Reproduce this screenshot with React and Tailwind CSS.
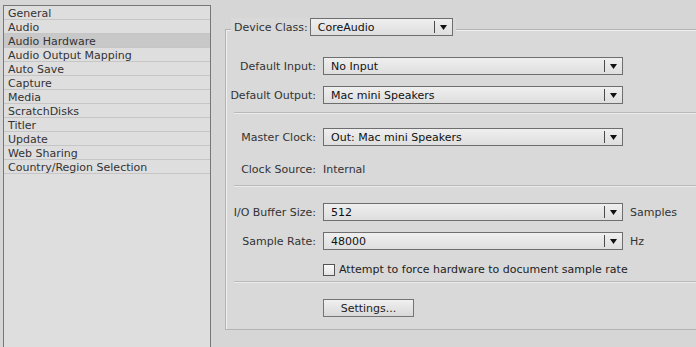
import React from "react";

const sections = [
  "General",
  "Audio",
  "Audio Hardware",
  "Audio Output Mapping",
  "Auto Save",
  "Capture",
  "Media",
  "ScratchDisks",
  "Titler",
  "Update",
  "Web Sharing",
  "Country/Region Selection",
];

const Arrow = () => (
  <svg width="7" height="5" viewBox="0 0 7 5" className="shrink-0">
    <path d="M0 0h7L3.5 5z" fill="#111" />
  </svg>
);

const Dropdown = ({ value, width }) => (
  <div
    className={`flex h-[18px] items-center border border-[#6e6e6e] bg-gradient-to-b from-[#efefef] to-[#dedede] ${width}`}
  >
    <span className="flex-1 truncate pl-[7px] text-[#111]">{value}</span>
    <span className="h-[12px] w-px bg-[#4a4a4a]" />
    <span className="flex w-[17px] justify-center">
      <Arrow />
    </span>
  </div>
);

const Row = ({ label, children }) => (
  <div className="flex items-center">
    <span className="w-[90px] shrink-0 whitespace-nowrap text-right text-[#333]">
      {label}
    </span>
    <div className="ml-[7px] flex items-center">{children}</div>
  </div>
);

const Separator = () => (
  <div className="ml-[8px] border-t border-b border-t-[#b9b9b9] border-b-[#ececec]" />
);

export default function App() {
  return (
    <div className="flex h-[347px] w-[696px] overflow-hidden bg-[#d6d6d6] font-['DejaVu_Sans',sans-serif] text-[11px] leading-[13px]">
      {/* section list */}
      <div className="ml-[3px] mt-[5px] h-[360px] w-[208px] shrink-0 border border-[#777] bg-[#dedede]">
        {sections.map((s) => (
          <div
            key={s}
            className={`h-[14px] border-b border-[#c6c6c6] pl-[4px] pt-px text-[#333] ${
              s === "Audio Hardware" ? "bg-[#c8c8c8]" : ""
            }`}
          >
            {s}
          </div>
        ))}
      </div>

      {/* audio hardware group */}
      <div className="ml-[14px] mt-[29px] h-[301px] w-[480px] shrink-0 border border-[#b3b3b3] bg-[#d9d9d9] shadow-[inset_1px_1px_0_#f0f0f0]">
        <div className="-mt-[12px] ml-[5px] flex w-fit items-center gap-[2px] bg-[#d9d9d9] px-[3px]">
          <span className="whitespace-nowrap text-[#333]">Device Class:</span>
          <Dropdown value="CoreAudio" width="w-[143px]" />
        </div>

        <div className="mt-[21px]">
          <Row label="Default Input:">
            <Dropdown value="No Input" width="w-[300px]" />
          </Row>
        </div>
        <div className="mt-[11px]">
          <Row label="Default Output:">
            <Dropdown value="Mac mini Speakers" width="w-[300px]" />
          </Row>
        </div>

        <div className="mt-[8px]">
          <Separator />
        </div>

        <div className="mt-[14px]">
          <Row label="Master Clock:">
            <Dropdown value="Out: Mac mini Speakers" width="w-[300px]" />
          </Row>
        </div>
        <div className="mt-[14px] flex h-[18px] items-center">
          <Row label="Clock Source:">
            <span className="text-[#333]">Internal</span>
          </Row>
        </div>

        <div className="mt-[7px]">
          <Separator />
        </div>

        <div className="mt-[16px]">
          <Row label="I/O Buffer Size:">
            <Dropdown value="512" width="w-[300px]" />
            <span className="ml-[7px] text-[#333]">Samples</span>
          </Row>
        </div>
        <div className="mt-[11px]">
          <Row label="Sample Rate:">
            <Dropdown value="48000" width="w-[300px]" />
            <span className="ml-[7px] text-[#333]">Hz</span>
          </Row>
        </div>
        <div className="mt-[13px]">
          <Row label="">
            <label className="flex items-center gap-[4px] whitespace-nowrap text-[#222]">
              <span className="h-[12px] w-[12px] border border-[#555] bg-gradient-to-b from-[#fafafa] to-[#e4e4e4]" />
              Attempt to force hardware to document sample rate
            </label>
          </Row>
        </div>

        <div className="mt-[5px]">
          <Separator />
        </div>

        <div className="mt-[16px]">
          <Row label="">
            <button className="h-[18px] w-[91px] border border-[#747474] bg-gradient-to-b from-[#f0f0f0] to-[#d8d8d8] text-[#222]">
              Settings...
            </button>
          </Row>
        </div>
      </div>
    </div>
  );
}
